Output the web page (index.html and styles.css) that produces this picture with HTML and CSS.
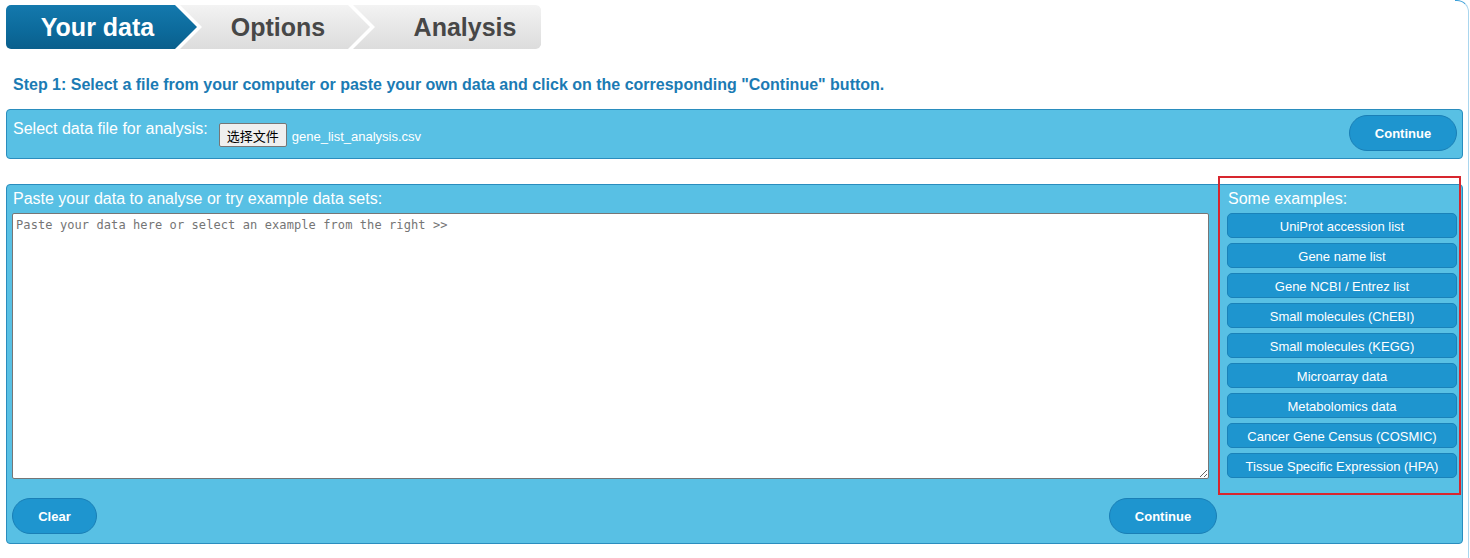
FILE: index.html
```html
<!DOCTYPE html>
<html>
<head>
<meta charset="utf-8">
<link rel="stylesheet" href="styles.css">
</head>
<body>
<div class="page">
  <div class="edge"></div>
  <nav class="tabs">
    <div class="tab tab-first active">Your data</div>
    <div class="tab tab-mid">Options</div>
    <div class="tab tab-last">Analysis</div>
  </nav>

  <p class="step">Step 1: Select a file from your computer or paste your own data and click on the corresponding "Continue" button.</p>

  <section class="panel panel-file">
    <span class="label">Select data file for analysis:</span>
    <button class="file-btn">选择文件</button>
    <span class="file-name">gene_list_analysis.csv</span>
    <button class="pill pill-continue top-continue">Continue</button>
  </section>

  <section class="panel panel-paste">
    <div class="paste-col">
      <div class="panel-title">Paste your data to analyse or try example data sets:</div>
      <textarea class="data-area" placeholder="Paste your data here or select an example from the right >>"></textarea>
      <div class="actions">
        <button class="pill pill-clear">Clear</button>
        <button class="pill pill-continue">Continue</button>
      </div>
    </div>
    <div class="examples">
      <div class="panel-title">Some examples:</div>
      <button class="ex-btn">UniProt accession list</button>
      <button class="ex-btn">Gene name list</button>
      <button class="ex-btn">Gene NCBI / Entrez list</button>
      <button class="ex-btn">Small molecules (ChEBI)</button>
      <button class="ex-btn">Small molecules (KEGG)</button>
      <button class="ex-btn">Microarray data</button>
      <button class="ex-btn">Metabolomics data</button>
      <button class="ex-btn">Cancer Gene Census (COSMIC)</button>
      <button class="ex-btn">Tissue Specific Expression (HPA)</button>
      <div class="highlight"></div>
    </div>
  </section>
</div>
</body>
</html>
```

FILE: styles.css
```css
* { box-sizing: border-box; }
html, body { margin: 0; padding: 0; background: #fff; }
body {
  font-family: "Liberation Sans", Arial, sans-serif;
  width: 1470px;
  height: 558px;
  overflow: hidden;
}
.page {
  position: relative;
  padding: 5px 7px 0 6px;
}
.edge {
  position: absolute;
  top: 0;
  right: 1px;
  width: 14px;
  height: 558px;
  border-top: 1px solid #3a9fd8;
  border-right: 1px solid #a9d6ee;
  border-top-right-radius: 12px;
}

/* Tabs */
.tabs {
  display: flex;
  height: 44px;
}
.tab {
  height: 44px;
  display: flex;
  align-items: center;
  justify-content: center;
  font-weight: bold;
  font-size: 25px;
  color: #474747;
  background: linear-gradient(#f3f3f3, #e6e6e6 55%, #dcdcdc);
}
.tab-first {
  width: 191px;
  padding-right: 8px;
  border-radius: 5px 0 0 5px;
  clip-path: polygon(0 0, 169px 0, 191px 50%, 169px 100%, 0 100%);
}
.tab.active {
  color: #fff;
  background: linear-gradient(#1479ad, #0c6a9b 60%, #0a5f8c);
}
.tab-mid {
  width: 190px;
  margin-left: -17px;
  padding-left: 6px;
  clip-path: polygon(0 0, 168px 0, 190px 50%, 168px 100%, 0 100%, 22px 50%);
}
.tab-last {
  width: 188px;
  margin-left: -17px;
  padding-left: 36px;
  clip-path: polygon(0 0, 183px 0, 186px 1px, 188px 4px, 188px 40px, 186px 43px, 183px 44px, 0 100%, 22px 50%);
}

/* Step text */
.step {
  margin: 27px 0 0 7px;
  font-size: 16px;
  font-weight: bold;
  color: #1b7bb4;
  line-height: 18px;
}

/* Panels */
.panel {
  background: #58c0e4;
  border: 1px solid #2a8dbe;
  border-radius: 4px;
  color: #fff;
}
.panel-file {
  margin-top: 15px;
  height: 50px;
  display: flex;
  align-items: center;
  padding: 0 5px 0 6px;
}
.label {
  font-size: 16px;
  margin-bottom: 11px;
}
.file-btn {
  margin-left: 11px;
  height: 24px;
  width: 68px;
  padding: 0;
  font-family: "Noto Sans CJK SC", sans-serif;
  font-size: 13px;
  color: #000;
  background: #efefef;
  border: 1px solid #767676;
  border-radius: 2px;
  margin-top: 2px;
}
.file-name {
  margin-left: 5px;
  font-size: 13px;
  margin-top: 4px;
}
.top-continue {
  margin-left: auto;
  margin-top: -2px;
}

.pill {
  height: 36px;
  border-radius: 18px;
  background: #1e95cf;
  border: 1px solid #1a7fb6;
  color: #fff;
  font-family: "Liberation Sans", Arial, sans-serif;
  font-weight: bold;
  font-size: 13px;
  padding: 0;
}
.pill-continue { width: 108px; }
.pill-clear { width: 85px; }

.panel-paste {
  margin-top: 25px;
  height: 360px;
  display: flex;
  gap: 10px;
  padding: 4px 5px 0 5px;
}
.paste-col {
  width: 1205px;
  display: flex;
  flex-direction: column;
}
.panel-title {
  font-size: 16px;
  line-height: 20px;
  height: 20px;
  margin-left: 1px;
}
.data-area {
  margin-top: 4px;
  width: 1197px;
  height: 266px;
  resize: both;
  border: 1px solid #767676;
  border-radius: 2px;
  padding: 4px 3px 2px;
  font-family: "DejaVu Sans Mono", monospace;
  font-size: 12px;
  letter-spacing: 0.09px;
  line-height: 15px;
  color: #333;
  background: #fff;
}
.data-area::placeholder { color: #757575; }
.actions {
  margin-top: 19px;
  display: flex;
  justify-content: space-between;
}

.examples {
  position: relative;
  width: 230px;
  display: flex;
  flex-direction: column;
  gap: 5px;
}
.examples .panel-title { margin-bottom: -1px; }
.ex-btn {
  height: 25px;
  background: #1e95cf;
  border: 1px solid #1a82b9;
  border-radius: 5px;
  color: #fff;
  font-family: "Liberation Sans", Arial, sans-serif;
  font-size: 13px;
  padding: 1px 0 0;
}
.highlight {
  position: absolute;
  left: -9px;
  top: -13px;
  width: 243px;
  height: 319px;
  border: 2px solid #d7262e;
  pointer-events: none;
}
```
